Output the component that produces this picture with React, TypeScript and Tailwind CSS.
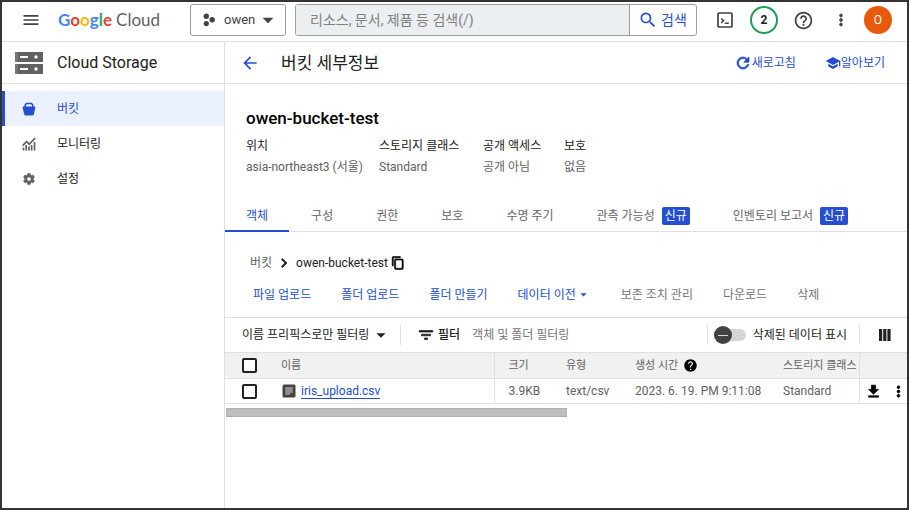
import React from "react";
import {
  MdArrowBack,
  MdArrowDropDown,
  MdChevronRight,
  MdContentCopy,
  MdFileDownload,
  MdFilterList,
  MdHelp,
  MdHelpOutline,
  MdMenu,
  MdMoreVert,
  MdRefresh,
  MdSchool,
  MdSearch,
  MdSettings,
} from "react-icons/md";

const FONT = "font-['Roboto','Noto_Sans_CJK_KR',sans-serif]";

// Thickens only the glyph path; the icons also hold an unfilled bounding path.
const BOLD = "[&>path:last-child]:[stroke-width:1px]";

function TerminalIcon() {
  return (
    <svg viewBox="0 0 18 18" className="size-[18px]" fill="none" stroke="currentColor" aria-hidden="true">
      <rect x="2" y="2" width="14" height="14" rx="1" strokeWidth="1.7" />
      <path d="M5.200 7.500l2.300 2.200-2.300 2.200M8.800 12.200h4" strokeWidth="1.500" />
    </svg>
  );
}

function ProjectIcon() {
  return (
    <svg viewBox="0 0 12 14" className="h-[14px] w-3" fill="currentColor" aria-hidden="true">
      <circle cx="3.3" cy="3.2" r="2.7" />
      <circle cx="9.2" cy="6.8" r="2.7" />
      <circle cx="3.3" cy="10.6" r="2.6" />
    </svg>
  );
}

function ServerIcon() {
  return (
    <svg viewBox="0 0 28 22" className="h-[22px] w-7" aria-hidden="true">
      <path d="M0 0h28v10H0zM0 12h28v10H0z" fill="#616161" />
      <path d="M0 0h3v10H0zM0 12h3v10H0z" fill="#757575" />
      <path d="M5 4h8v2H5zM5 16h8v2H5z" fill="#fff" />
      <circle cx="21" cy="5" r="1.7" fill="#fff" />
      <circle cx="21" cy="17" r="1.7" fill="#fff" />
    </svg>
  );
}

function BucketIcon() {
  return (
    <svg viewBox="0 0 14 14" className="size-[14px]" aria-hidden="true">
      <path
        d="M1.800 4.600h10.400c.8 0 1.300.6 1.100 1.400l-1.500 6.300c-.2.8-.7 1.200-1.500 1.200H3.700c-.8 0-1.300-.4-1.500-1.200L.7 6c-.2-.8.3-1.400 1.100-1.400z"
        fill="currentColor"
      />
      <path d="M3.200 5.500V3l1.300-1.500h5L10.800 3v2.500" fill="none" stroke="currentColor" strokeWidth="1.600" />
    </svg>
  );
}

function MonitoringIcon() {
  return (
    <svg viewBox="0 0 14 14" className="size-[14px]" fill="none" stroke="currentColor" aria-hidden="true">
      <path d="M.6 8.600l4-4 2.600 2.600L13.200 1" strokeWidth="1.700" />
      <path d="M1.500 10.500V13.500M4.200 8V13.500M6.900 9.500V13.500M9.600 8V13.500M12.500 5V13.500" strokeWidth="1.700" />
    </svg>
  );
}

function DocIcon() {
  return (
    <svg viewBox="0 0 14 14" className="size-[14px] shrink-0" aria-hidden="true">
      <rect x=".5" y=".5" width="13" height="13" rx="1.500" fill="#424242" />
      <path d="M3.200 4h7.600M3.200 6h7.600M3.200 8h7.600M3.200 10h5" stroke="#d6d6d6" strokeWidth="1" />
    </svg>
  );
}

function ColumnsIcon() {
  return (
    <svg viewBox="0 0 12 12" className="size-3" fill="currentColor" aria-hidden="true">
      <path d="M0 0h3.200v12H0zM4.200 0h3.200v12H4.200zM8.400 0h3.200v12H8.400z" />
    </svg>
  );
}

function Logo() {
  return (
    <a href="#" aria-label="Google Cloud" className="flex gap-1 font-['Lato',sans-serif] text-[17px] leading-6">
      <span className="font-bold">
        <span className="text-[#4285f4]">G</span>
        <span className="text-[#ea4335]">o</span>
        <span className="text-[#fbbc04]">o</span>
        <span className="text-[#4285f4]">g</span>
        <span className="text-[#34a853]">l</span>
        <span className="text-[#ea4335]">e</span>
      </span>
      <span className="text-[#5f6368]">Cloud</span>
    </a>
  );
}

function TopBar() {
  return (
    <header className="flex h-10 shrink-0 items-center border-b border-[#e0e0e0] pr-[15px] pb-[3px] pl-[19px] text-[#424242]">
      <button aria-label="메뉴" className="mr-[17px]">
        <MdMenu className="size-5" />
      </button>
      <div className="w-[132px] shrink-0">
        <Logo />
      </div>
      <label className="relative flex h-8 w-24 shrink-0 items-center rounded-[3px] border border-[#9e9e9e] pl-3">
        <ProjectIcon />
        <select
          aria-label="프로젝트"
          className="absolute inset-0 appearance-none bg-transparent pl-[33px] text-[13px] text-[#3c4043] outline-none"
        >
          <option>owen</option>
        </select>
        <MdArrowDropDown className="pointer-events-none mr-1 ml-auto size-[26px]" />
      </label>
      <form className="ml-[9px] flex h-8 min-w-0 flex-1 overflow-hidden rounded-[3px] border border-[#9e9e9e]">
        <input
          type="search"
          aria-label="검색"
          placeholder="리소스, 문서, 제품 등 검색(/)"
          className="min-w-0 flex-1 bg-[#eceff1] px-[14px] text-[14px] outline-none placeholder:text-[#808080]"
        />
        <button
          type="button"
          className="flex w-[67px] items-center gap-[3px] border-l border-[#9e9e9e] pl-2 text-[14px] text-[#254fd0]"
        >
          <MdSearch className="size-5" />
          검색
        </button>
      </form>
      <div className="ml-[19px] flex shrink-0 items-center">
        <button aria-label="Cloud Shell">
          <TerminalIcon />
        </button>
        <button className="ml-4 size-7 rounded-full border-2 border-[#1e9e54] text-[12px] font-bold text-[#202124]">
          2
        </button>
        <button aria-label="도움말" className="ml-[15px]">
          <MdHelpOutline className="size-[21px]" />
        </button>
        <button aria-label="더보기" className="ml-[18px]">
          <MdMoreVert className={`${BOLD} size-[18px]`} />
        </button>
        <button className="ml-[14px] size-7 rounded-full bg-[#e8590c] text-[12px] text-white">O</button>
      </div>
    </header>
  );
}

const NAV = [
  { label: "버킷", icon: <BucketIcon />, active: true },
  { label: "모니터링", icon: <MonitoringIcon />, active: false },
  { label: "설정", icon: <MdSettings className={`${BOLD} size-[14px]`} />, active: false },
];

function Sidebar() {
  return (
    <aside className="w-[223px] shrink-0 border-r border-[#e0e0e0]">
      <div className="flex h-[42px] items-center gap-[14px] border-b border-[#e0e0e0] pl-[13px]">
        <ServerIcon />
        <h2 className="text-[16px] font-normal">Cloud Storage</h2>
      </div>
      <nav className="pt-[7px]">
        {NAV.map((n) => (
          <a
            key={n.label}
            href="#"
            className={
              n.active
                ? "flex h-[35px] items-center gap-[21px] border-l-[3px] border-[#254fd0] bg-[#ebf1fe] pl-[17px] text-[#254fd0]"
                : "flex h-[35px] items-center gap-[21px] border-l-[3px] border-transparent pl-[17px]"
            }
          >
            <span className={n.active ? "text-[#254fd0]" : "text-[#616161]"}>{n.icon}</span>
            {n.label}
          </a>
        ))}
      </nav>
    </aside>
  );
}

const DETAILS = [
  ["위치", "asia-northeast3 (서울)"],
  ["스토리지 클래스", "Standard"],
  ["공개 액세스", "공개 아님"],
  ["보호", "없음"],
];

const TABS = [
  { label: "객체" },
  { label: "구성" },
  { label: "권한" },
  { label: "보호" },
  { label: "수명 주기" },
  { label: "관측 가능성", isNew: true },
  { label: "인벤토리 보고서", isNew: true },
];

function Tabs() {
  return (
    <div role="tablist" className="mt-[22px] flex h-8 gap-px border-b border-[#e0e0e0] whitespace-nowrap">
      {TABS.map((t, i) => (
        <button
          key={t.label}
          role="tab"
          aria-selected={i === 0}
          className={
            i === 0
              ? "-mb-px flex items-center border-b-2 border-[#254fd0] px-[21px] pt-px text-[#254fd0]"
              : "-mb-px flex items-center gap-[7px] border-b-2 border-transparent px-[21px] pt-px text-[#666]"
          }
        >
          {t.label}
          {t.isNew && (
            <span className="rounded-[2px] bg-[#254fd0] px-[3px] leading-[18px] text-white">신규</span>
          )}
        </button>
      ))}
    </div>
  );
}

const CHECKBOX = "block size-[15px] appearance-none rounded-[2px] border-2 border-[#212121] bg-white";

function ObjectTable() {
  return (
    <table className="w-full table-fixed border-collapse text-left whitespace-nowrap text-[#616161]">
      <colgroup>
        <col className="w-[42px]" />
        <col />
        <col className="w-[58px]" />
        <col className="w-[69px]" />
        <col className="w-[148px]" />
        <col className="w-[90px]" />
        <col className="w-[48px]" />
      </colgroup>
      <thead>
        <tr className="h-[26px] border-y border-[#e0e0e0] bg-[#f1f1f1] text-[11px]">
          <th className="pl-[17px]">
            <input type="checkbox" aria-label="모두 선택" className={CHECKBOX} />
          </th>
          <th className="pl-[14px] font-normal">이름</th>
          <th className="border-l border-[#e0e0e0] pl-[14px] font-normal">크기</th>
          <th className="pl-[14px] font-normal">유형</th>
          <th className="pl-[14px] font-normal">
            <span className="flex items-center gap-[5px]">
              생성 시간
              <MdHelp className="size-[15px] text-black" />
            </span>
          </th>
          <th className="pl-[14px] font-normal">스토리지 클래스</th>
          <th className="border-l border-[#e0e0e0]" />
        </tr>
      </thead>
      <tbody>
        <tr className="h-[25px] border-b border-[#e0e0e0]">
          <td className="pl-[17px]">
            <input type="checkbox" aria-label="iris_upload.csv 선택" className={CHECKBOX} />
          </td>
          <td className="pl-[15px]">
            <span className="flex items-center gap-[5px]">
              <DocIcon />
              <a href="#" className="border-b border-[#254fd0] leading-[14px] text-[#254fd0]">
                iris_upload.csv
              </a>
            </span>
          </td>
          <td className="border-l border-[#e0e0e0] pl-[14px]">3.9KB</td>
          <td className="pl-[14px]">text/csv</td>
          <td className="pl-[14px]">2023. 6. 19. PM 9:11:08</td>
          <td className="pl-[14px]">Standard</td>
          <td className="border-l border-[#e0e0e0]">
            <span className="flex items-center gap-2 pl-[5px] text-black">
              <button aria-label="다운로드">
                <MdFileDownload className={`${BOLD} size-[17px]`} />
              </button>
              <button aria-label="더보기">
                <MdMoreVert className={`${BOLD} size-[17px]`} />
              </button>
            </span>
          </td>
        </tr>
      </tbody>
    </table>
  );
}

function FilterBar() {
  return (
    <div className="flex h-[35px] items-center border-t border-[#e0e0e0] pl-[17px] whitespace-nowrap text-[#212121]">
      <label className="flex items-center">
        <select aria-label="필터 방식" className="appearance-none bg-transparent outline-none">
          <option>이름 프리픽스로만 필터링</option>
        </select>
        <MdArrowDropDown className="size-[22px]" />
      </label>
      <span className="mr-4 ml-2 h-5 border-l border-[#e0e0e0]" />
      <label htmlFor="object-filter" className="flex items-center gap-[3px] font-medium">
        <MdFilterList className={`${BOLD} size-[18px]`} />
        필터
      </label>
      <input
        id="object-filter"
        placeholder="객체 및 폴더 필터링"
        className="ml-3 min-w-0 flex-1 outline-none placeholder:text-[#757575]"
      />
      <label className="flex h-5 items-center gap-[7px] border-l border-[#e0e0e0] pl-[6px]">
        <span className="flex h-3 w-8 items-center rounded-full bg-[#d6d6d6]">
          <input type="checkbox" role="switch" className="peer sr-only" />
          <span className="flex size-[18px] items-center justify-center rounded-full bg-[#424242]">
            <span className="h-px w-[10px] bg-[#d6d6d6]" />
          </span>
        </span>
        삭제된 데이터 표시
      </label>
      <button aria-label="열 표시" className="ml-3 flex h-5 w-12 items-center border-l border-[#e0e0e0] pl-[19px]">
        <ColumnsIcon />
      </button>
    </div>
  );
}

function Main() {
  return (
    <main className="min-w-0 flex-1">
      <div className="flex h-[42px] items-center border-b border-[#e0e0e0] pr-[22px] pl-[15px]">
        <button aria-label="뒤로" className="text-[#254fd0]">
          <MdArrowBack className="size-5" />
        </button>
        <h1 className="ml-[21px] text-[17px] font-normal">버킷 세부정보</h1>
        <button className="ml-auto flex items-center text-[#254fd0]">
          <MdRefresh className={`${BOLD} size-[18px]`} />
          새로고침
        </button>
        <button className="ml-[29px] flex items-center text-[#254fd0]">
          <MdSchool className="size-4" />
          알아보기
        </button>
      </div>

      <section className="pt-[22px] pl-[21px]">
        <h2 className="text-[17px] leading-6 font-medium text-black">owen-bucket-test</h2>
        <dl className="mt-[6px] grid grid-cols-[133px_104px_81px_auto] leading-[21px] whitespace-nowrap">
          {DETAILS.map(([k, v]) => (
            <div key={k}>
              <dt>{k}</dt>
              <dd className="text-[#616161]">{v}</dd>
            </div>
          ))}
        </dl>
      </section>

      <Tabs />

      <div className="flex items-center pt-[22px] pl-[25px]">
        <a href="#" className="text-[#616161]">
          버킷
        </a>
        <MdChevronRight className={`${BOLD} mx-[3px] size-[18px]`} />
        <span>owen-bucket-test</span>
        <button aria-label="복사" className="ml-[3px]">
          <MdContentCopy className={`${BOLD} size-[14px] text-black`} />
        </button>
      </div>

      <div className="flex h-[45px] items-center gap-[30px] pl-7 whitespace-nowrap text-[#254fd0]">
        <button>파일 업로드</button>
        <button>폴더 업로드</button>
        <button>폴더 만들기</button>
        <button className="flex items-center">
          데이터 이전
          <MdArrowDropDown className="size-[15px]" />
        </button>
        <button disabled className="text-[#757575]">보존 조치 관리</button>
        <button disabled className="text-[#757575]">다운로드</button>
        <button disabled className="text-[#757575]">삭제</button>
      </div>

      <FilterBar />
      <ObjectTable />
      <div className="mt-1 ml-px h-[9px] w-1/2 border border-[#b0b0b0] bg-[#bdbdbd]" />
    </main>
  );
}

export default function App() {
  return (
    <div
      className={`${FONT} flex min-h-screen flex-col border-2 border-[#333] bg-white text-[12px] leading-[18px] text-[#212121]`}
    >
      <TopBar />
      <div className="flex flex-1">
        <Sidebar />
        <Main />
      </div>
    </div>
  );
}
